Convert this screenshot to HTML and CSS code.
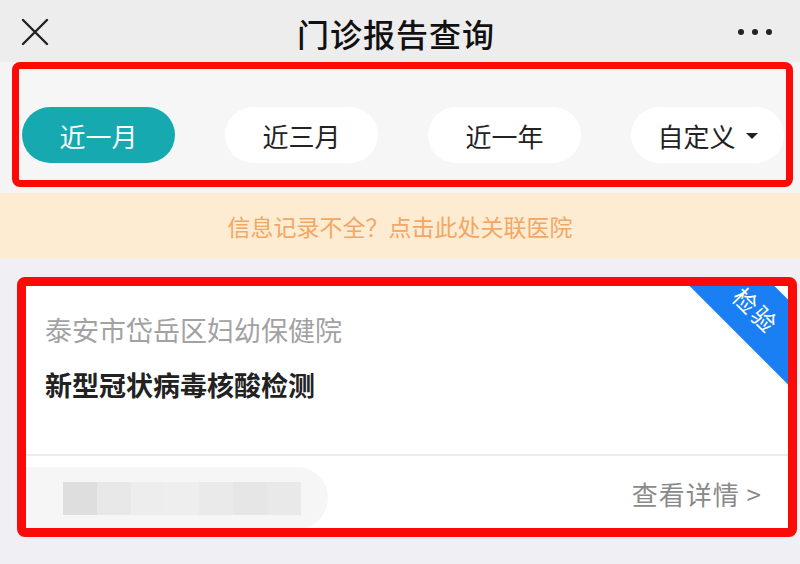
FILE: index.html
```html
<!DOCTYPE html>
<html lang="zh-CN">
<head>
<meta charset="utf-8">
<title>门诊报告查询</title>
<link rel="stylesheet" href="styles.css">
</head>
<body>
<header class="topbar">
  <div class="topbar-left">
    <svg class="icon-close" width="30" height="28" viewBox="0 0 30 28"><path d="M3 2 L27 26 M27 2 L3 26" stroke="#222" stroke-width="2.4" fill="none" stroke-linecap="round"/></svg>
  </div>
  <div class="topbar-title">门诊报告查询</div>
  <div class="topbar-right">
    <span class="dot"></span><span class="dot"></span><span class="dot"></span>
  </div>
</header>

<div class="filter-wrap">
  <div class="filter">
    <div class="pill active">近一月</div>
    <div class="pill">近三月</div>
    <div class="pill">近一年</div>
    <div class="pill">自定义<span class="caret"></span></div>
  </div>
</div>

<div class="notice">信息记录不全？点击此处关联医院</div>

<div class="card">
  <div class="ribbon">检验</div>
  <div class="card-body">
    <div class="hospital">泰安市岱岳区妇幼保健院</div>
    <div class="exam">新型冠状病毒核酸检测</div>
  </div>
  <div class="card-foot">
    <div class="masked">
      <span class="mb m1"></span><span class="mb m2"></span><span class="mb m3"></span><span class="mb m4"></span><span class="mb m5"></span><span class="mb m6"></span><span class="mb m7"></span>
    </div>
    <div class="detail">查看详情 &gt;</div>
  </div>
</div>
</body>
</html>
```

FILE: styles.css
```css
* { box-sizing: border-box; }
html, body { margin: 0; padding: 0; }
body {
  width: 800px;
  height: 564px;
  overflow: hidden;
  background: #efeff4;
  font-family: "Noto Sans CJK SC", "Noto Sans", sans-serif;
  color: #222;
}

.topbar {
  height: 62px;
  background: #ededed;
  display: grid;
  grid-template-columns: 1fr auto 1fr;
  align-items: center;
  padding: 0 28px 0 20px;
}
.topbar-left { display: flex; align-items: center; }
.icon-close { display: block; margin-top: 2px; }
.topbar-title {
  font-size: 32px;
  font-weight: 500;
  color: #111;
  letter-spacing: 1px;
  margin-top: 4px;
}
.topbar-right {
  display: flex;
  justify-content: flex-end;
  gap: 8px;
  margin-top: 2px;
}
.dot {
  width: 6px;
  height: 6px;
  border-radius: 50%;
  background: #222;
}

.filter-wrap {
  background: #f4f4f4;
  padding: 0 7px 6px 12px;
}
.filter {
  height: 125px;
  border: 7px solid #fb0a07;
  border-radius: 8px;
  background: #f6f6f6;
  padding: 38px 0 0 3px;
  display: flex;
  gap: 50px;
  overflow: hidden;
}
.pill {
  flex: 0 0 153px;
  height: 56px;
  border-radius: 28px;
  background: #fff;
  display: flex;
  align-items: center;
  justify-content: center;
  font-size: 26px;
  color: #222;
}
.pill.active {
  background: #17a9b0;
  color: #fff;
}
.caret {
  display: inline-block;
  width: 0;
  height: 0;
  border-left: 6px solid transparent;
  border-right: 6px solid transparent;
  border-top: 6px solid #222;
  margin-left: 10px;
  margin-top: 2px;
}

.notice {
  height: 65px;
  background: #fdecd2;
  color: #f2a765;
  font-size: 23px;
  display: flex;
  align-items: center;
  justify-content: center;
}

.card {
  position: relative;
  margin: 19px 3px 0 17px;
  height: 260px;
  border: 9px solid #fb0a07;
  border-radius: 8px;
  background: #fff;
  overflow: hidden;
  display: flex;
  flex-direction: column;
}
.ribbon {
  position: absolute;
  left: 650px;
  top: -6px;
  width: 160px;
  height: 60px;
  background: #1a7ff2;
  color: #fff;
  font-size: 24px;
  line-height: 60px;
  text-align: center;
  letter-spacing: 2px;
  transform: rotate(45deg);
}
.card-body {
  padding: 26px 20px 0 19px;
  height: 170px;
  border-bottom: 2px solid #ececec;
}
.hospital {
  font-size: 27px;
  line-height: 35px;
  color: #a2a2a2;
}
.exam {
  margin-top: 20px;
  font-size: 27px;
  line-height: 35px;
  font-weight: 700;
  color: #222;
}
.card-foot {
  flex: 1;
  display: flex;
  align-items: center;
  justify-content: space-between;
  padding-right: 26px;
}
.masked {
  align-self: flex-end;
  width: 302px;
  height: 62px;
  background: #f6f6f6;
  border-radius: 0 31px 31px 0;
  display: flex;
  align-items: center;
  padding-left: 37px;
  margin-bottom: -1px;
}
.mb {
  width: 34px;
  height: 33px;
  background: #e9e9e9;
}
.m1 { background: #dedede; }
.m2 { background: #e8e8e8; }
.m3 { background: #ededed; }
.m4 { background: #eeeeee; }
.m5 { background: #eaeaea; }
.m6 { background: #e6e6e6; }
.m7 { background: #e9e9e9; }
.detail {
  font-size: 26px;
  letter-spacing: 1px;
  color: #8a8a8a;
  margin-top: 2px;
}
```
